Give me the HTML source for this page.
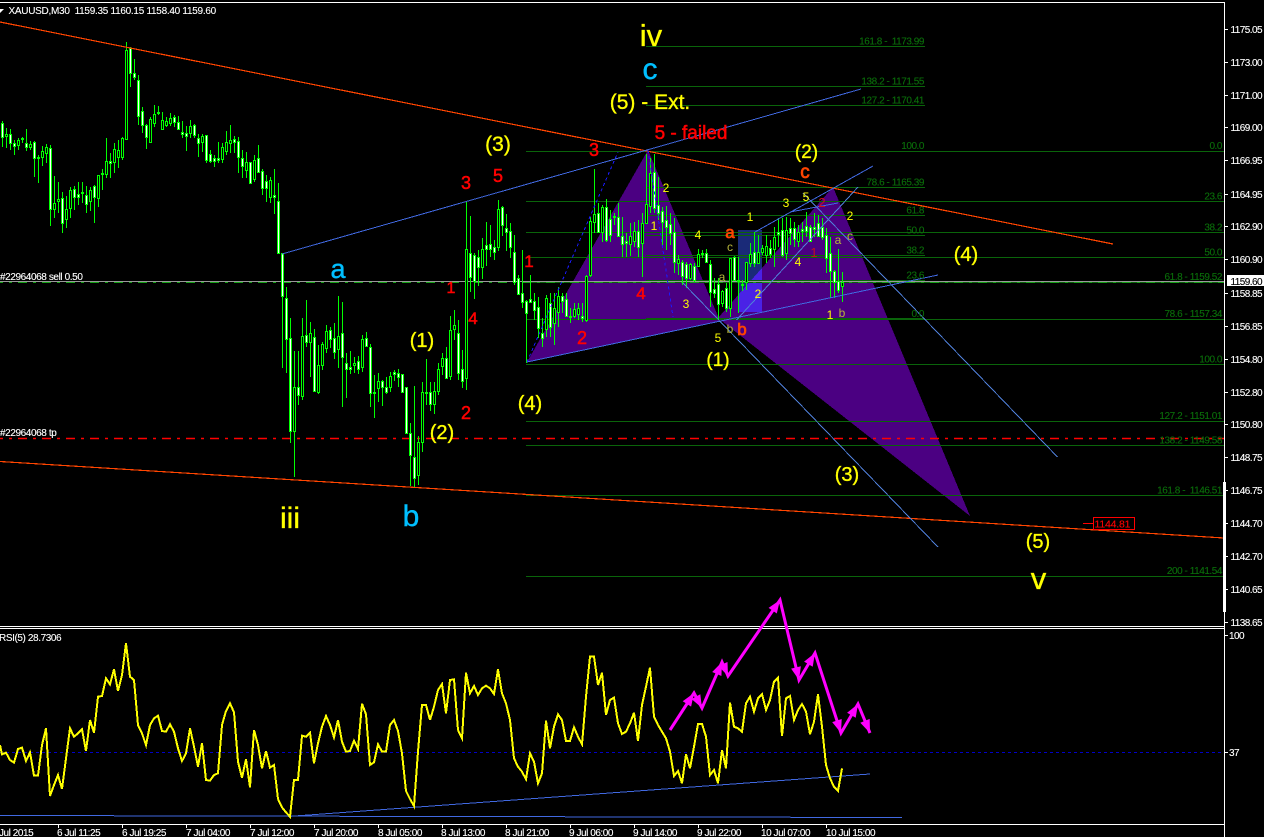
<!DOCTYPE html>
<html><head><meta charset="utf-8"><style>
html,body{margin:0;padding:0;background:#000;overflow:hidden}
svg{display:block}
text{font-family:"Liberation Sans",sans-serif}
.s{font-size:10px;letter-spacing:-.55px;fill:#fff;stroke:#fff;stroke-width:.12}
.t{letter-spacing:-.45px}
.f{font-size:10px;letter-spacing:-.45px;fill:#0a6e0a;stroke:#0a6e0a;stroke-width:.12;text-anchor:end}
.y{fill:#ff0;stroke:#ff0;stroke-width:.35;text-anchor:middle}
.r{fill:#f00;stroke:#f00;stroke-width:.5;text-anchor:middle}
.o{fill:#ff4500;stroke:#ff4500;stroke-width:.7;text-anchor:middle}
.c{fill:#00bfff;stroke:#00bfff;stroke-width:.4;text-anchor:middle}
.l{fill:#b4b43a;text-anchor:middle;font-size:12px}
.n{fill:#ff0;text-anchor:middle;font-size:12px}
</style></head><body>
<svg width="1264" height="837" viewBox="0 0 1264 837" xmlns="http://www.w3.org/2000/svg">
<rect width="1264" height="837" fill="#000"/>
<g shape-rendering="crispEdges">
<polygon points="527,362 648,150 720,321" fill="#4b0082"/>
<polygon points="718,318 833,187 970,516" fill="#4b0082"/>
<polygon points="738,230 762,230 762,268 738,295" fill="#1a2a78"/>
<polygon points="738,312 762,312 762,268 738,295" fill="#4a22e6"/>
</g>
<g stroke="#0a640a" stroke-width="1" fill="none" shape-rendering="crispEdges">
<path d="M646 46.5H925M646 86.5H925M646 105.5H925M646 187.5H925M646 215.5H925M646 235.5H925M646 255.5H925M646 280.5H925M646 318.5H925"/>
<path d="M526 151.5H1224M526 201.5H1224M526 232.5H1224M526 257.5H1224M526 282.5H1224M526 319.5H1224M526 364.5H1224M526 421.5H1224M526 445.5H1224M526 495.5H1224M526 576.5H1224"/>
</g>
<path d="M0 438.5H1224" stroke="#f00" stroke-width="1.5" stroke-dasharray="9 6 3 6" stroke-dashoffset="6" fill="none"/>
<path d="M0 281.5H1224" stroke="#9a9a9a" stroke-width="1" fill="none"/>
<path d="M0 282.5H1224" stroke="#16a016" stroke-width="1" stroke-dasharray="9 6 3 6" stroke-dashoffset="6" fill="none"/>
<path fill="none" stroke="#00ff00" stroke-width="1" d="M2.5 121V147M6.5 128V148M10.5 129V150M14.5 140V155M18.5 138V150M22.5 137V143M26.5 129V151M30.5 141V150M34.5 141V177M38.5 155V183M42.5 146V166M46.5 144V163M50.5 145V226M54.5 176V218M58.5 182V213M62.5 192V233M66.5 196V228M70.5 187V218M74.5 186V210M78.5 182V205M82.5 182V203M86.5 186V213M90.5 187V211M94.5 185V223M98.5 175V207M102.5 169V190M106.5 138V178M110.5 153V178M114.5 143V173M118.5 140V168M122.5 137V160M126.5 42V139M130.5 47V87M134.5 59V80M138.5 75V125M142.5 107V133M146.5 124V149M150.5 117V143M154.5 105V127M158.5 106V115M162.5 112V130M166.5 117V127M170.5 113V126M174.5 115V127M178.5 116V129M182.5 121V138M186.5 126V151M190.5 120V138M194.5 124V138M198.5 134V157M202.5 134V152M206.5 135V163M210.5 150V163M214.5 155V167M218.5 142V163M222.5 143V163M226.5 131V155M230.5 125V153M234.5 136V153M238.5 137V173M242.5 150V178M246.5 152V178M250.5 162V183M254.5 155V182M258.5 145V173M262.5 169V195M266.5 175V202M270.5 177V203M274.5 169V214M278.5 183V254M282.5 253V368M286.5 287V373M290.5 318V443M294.5 351V477M298.5 351V405M302.5 318V400M306.5 300V347M310.5 322V377M314.5 329V392M318.5 345V394M322.5 342V370M326.5 325V353M330.5 327V348M334.5 323V359M338.5 296V368M342.5 302V407M346.5 353V398M350.5 351V374M354.5 357V373M358.5 356V374M362.5 335V372M366.5 332V346M370.5 344V407M374.5 375V418M378.5 373V402M382.5 380V406M386.5 377V394M390.5 372V392M394.5 370V381M398.5 369V387M402.5 374V392M406.5 387V433M410.5 423V486M414.5 386V487M418.5 436V485M422.5 382V452M426.5 359V405M430.5 382V411M434.5 382V414M438.5 363V395M442.5 353V375M446.5 347V379M450.5 316V380M454.5 310V340M458.5 320V380M462.5 350V388M466.5 202V390M470.5 216V292M474.5 253V299M478.5 250V286M482.5 238V279M486.5 222V266M490.5 225V257M494.5 240V260M498.5 200V251M502.5 206V236M506.5 214V251M510.5 223V258M514.5 235V285M518.5 275V295M522.5 250V308M526.5 300V363M530.5 275V303M534.5 293V320M538.5 297V338M542.5 318V347M546.5 295V337M550.5 293V337M554.5 293V345M558.5 287V327M562.5 293V313M566.5 293V317M570.5 308V323M574.5 303V318M578.5 303V320M582.5 303V322M586.5 275V322M590.5 217V277M594.5 169V233M598.5 203V233M602.5 205V242M606.5 199V242M610.5 210V242M614.5 213V225M618.5 203V236M622.5 217V257M626.5 233V257M630.5 223V256M634.5 222V247M638.5 220V257M642.5 213V277M646.5 154V223M650.5 158V213M654.5 154V213M658.5 177V220M662.5 207V245M666.5 206V250M670.5 213V245M674.5 218V273M678.5 255V275M682.5 260V285M686.5 262V288M690.5 263V280M694.5 263V282M698.5 249V266M702.5 250V258M706.5 249V262M710.5 260V307M714.5 278V298M718.5 278V320M722.5 290V307M726.5 283V312M730.5 258V317M734.5 256V280M738.5 257V313M742.5 280V291M746.5 262V290M750.5 243V267M754.5 232V267M758.5 235V263M762.5 245V255M766.5 235V263M770.5 240V258M774.5 227V267M778.5 218V247M782.5 218V257M786.5 217V260M790.5 218V245M794.5 222V247M798.5 225V247M802.5 222V242M806.5 212V237M810.5 225V242M814.5 213V237M818.5 215V237M822.5 218V240M826.5 228V273M830.5 237V298M834.5 270V298M838.5 249V293M842.5 272V302"/>
<path fill="#fff" stroke="#00ff00" stroke-width="1" d="M1.5 123.5h2V137.5h-2zM9.5 134.5h2V143.5h-2zM13.5 143.5h2V146.5h-2zM21.5 138.5h2V139.5h-2zM25.5 143.5h2V147.5h-2zM33.5 142.5h2V158.5h-2zM37.5 157.5h2V158.5h-2zM49.5 148.5h2V209.5h-2zM61.5 198.5h2V223.5h-2zM73.5 189.5h2V197.5h-2zM77.5 194.5h2V197.5h-2zM81.5 192.5h2V193.5h-2zM85.5 195.5h2V204.5h-2zM93.5 186.5h2V197.5h-2zM101.5 173.5h2V174.5h-2zM109.5 161.5h2V163.5h-2zM129.5 48.5h2V73.5h-2zM133.5 73.5h2V77.5h-2zM137.5 80.5h2V116.5h-2zM141.5 111.5h2V125.5h-2zM145.5 125.5h2V137.5h-2zM157.5 112.5h2V113.5h-2zM173.5 117.5h2V122.5h-2zM177.5 122.5h2V129.5h-2zM181.5 132.5h2V134.5h-2zM185.5 133.5h2V136.5h-2zM193.5 125.5h2V135.5h-2zM197.5 138.5h2V143.5h-2zM205.5 135.5h2V160.5h-2zM209.5 154.5h2V161.5h-2zM213.5 158.5h2V161.5h-2zM217.5 158.5h2V160.5h-2zM233.5 139.5h2V142.5h-2zM237.5 141.5h2V157.5h-2zM241.5 158.5h2V166.5h-2zM249.5 162.5h2V183.5h-2zM257.5 158.5h2V172.5h-2zM261.5 171.5h2V188.5h-2zM265.5 181.5h2V188.5h-2zM273.5 195.5h2V197.5h-2zM277.5 201.5h2V253.5h-2zM281.5 253.5h2V296.5h-2zM285.5 298.5h2V339.5h-2zM289.5 338.5h2V431.5h-2zM297.5 387.5h2V395.5h-2zM305.5 335.5h2V342.5h-2zM313.5 337.5h2V391.5h-2zM329.5 330.5h2V339.5h-2zM333.5 338.5h2V352.5h-2zM341.5 333.5h2V357.5h-2zM345.5 363.5h2V369.5h-2zM349.5 367.5h2V369.5h-2zM357.5 361.5h2V369.5h-2zM365.5 338.5h2V346.5h-2zM369.5 347.5h2V393.5h-2zM381.5 381.5h2V387.5h-2zM385.5 387.5h2V392.5h-2zM393.5 372.5h2V374.5h-2zM397.5 373.5h2V377.5h-2zM401.5 374.5h2V392.5h-2zM405.5 387.5h2V433.5h-2zM409.5 433.5h2V455.5h-2zM413.5 457.5h2V478.5h-2zM425.5 392.5h2V393.5h-2zM429.5 392.5h2V404.5h-2zM445.5 358.5h2V378.5h-2zM457.5 333.5h2V373.5h-2zM461.5 369.5h2V381.5h-2zM469.5 253.5h2V277.5h-2zM473.5 255.5h2V281.5h-2zM477.5 257.5h2V267.5h-2zM485.5 245.5h2V249.5h-2zM489.5 244.5h2V249.5h-2zM493.5 247.5h2V252.5h-2zM501.5 207.5h2V225.5h-2zM505.5 228.5h2V232.5h-2zM509.5 231.5h2V247.5h-2zM513.5 252.5h2V282.5h-2zM517.5 278.5h2V294.5h-2zM521.5 293.5h2V302.5h-2zM525.5 301.5h2V313.5h-2zM529.5 299.5h2V302.5h-2zM533.5 301.5h2V310.5h-2zM537.5 307.5h2V328.5h-2zM541.5 333.5h2V338.5h-2zM549.5 303.5h2V327.5h-2zM561.5 296.5h2V301.5h-2zM565.5 299.5h2V316.5h-2zM569.5 316.5h2V317.5h-2zM581.5 316.5h2V318.5h-2zM597.5 213.5h2V232.5h-2zM605.5 207.5h2V240.5h-2zM609.5 219.5h2V235.5h-2zM613.5 216.5h2V217.5h-2zM617.5 217.5h2V236.5h-2zM621.5 236.5h2V244.5h-2zM625.5 241.5h2V243.5h-2zM637.5 231.5h2V247.5h-2zM653.5 172.5h2V208.5h-2zM657.5 205.5h2V213.5h-2zM661.5 211.5h2V222.5h-2zM665.5 220.5h2V227.5h-2zM669.5 224.5h2V233.5h-2zM673.5 232.5h2V262.5h-2zM681.5 262.5h2V276.5h-2zM685.5 264.5h2V278.5h-2zM693.5 266.5h2V280.5h-2zM701.5 253.5h2V254.5h-2zM705.5 253.5h2V262.5h-2zM709.5 264.5h2V292.5h-2zM713.5 289.5h2V293.5h-2zM717.5 284.5h2V304.5h-2zM725.5 288.5h2V308.5h-2zM733.5 257.5h2V280.5h-2zM737.5 280.5h2V281.5h-2zM741.5 284.5h2V285.5h-2zM753.5 252.5h2V263.5h-2zM769.5 248.5h2V254.5h-2zM777.5 232.5h2V234.5h-2zM781.5 230.5h2V255.5h-2zM789.5 228.5h2V233.5h-2zM793.5 228.5h2V239.5h-2zM801.5 229.5h2V231.5h-2zM805.5 226.5h2V231.5h-2zM809.5 227.5h2V241.5h-2zM813.5 227.5h2V229.5h-2zM817.5 223.5h2V236.5h-2zM821.5 227.5h2V237.5h-2zM825.5 235.5h2V258.5h-2zM829.5 253.5h2V271.5h-2zM833.5 271.5h2V282.5h-2zM837.5 281.5h2V290.5h-2z"/>
<path fill="#000" stroke="#00ff00" stroke-width="1" d="M5.5 134.5h2V136.5h-2zM17.5 140.5h2V145.5h-2zM29.5 144.5h2V147.5h-2zM41.5 151.5h2V157.5h-2zM45.5 147.5h2V153.5h-2zM53.5 203.5h2V209.5h-2zM57.5 199.5h2V201.5h-2zM65.5 209.5h2V219.5h-2zM69.5 190.5h2V208.5h-2zM89.5 190.5h2V201.5h-2zM97.5 175.5h2V198.5h-2zM105.5 161.5h2V174.5h-2zM113.5 149.5h2V162.5h-2zM117.5 150.5h2V157.5h-2zM121.5 138.5h2V157.5h-2zM125.5 50.5h2V139.5h-2zM149.5 119.5h2V142.5h-2zM153.5 114.5h2V123.5h-2zM161.5 120.5h2V129.5h-2zM165.5 121.5h2V125.5h-2zM169.5 118.5h2V123.5h-2zM189.5 126.5h2V133.5h-2zM201.5 136.5h2V142.5h-2zM221.5 147.5h2V159.5h-2zM225.5 142.5h2V151.5h-2zM229.5 140.5h2V143.5h-2zM245.5 162.5h2V170.5h-2zM253.5 160.5h2V179.5h-2zM269.5 180.5h2V197.5h-2zM293.5 387.5h2V431.5h-2zM301.5 336.5h2V396.5h-2zM309.5 333.5h2V342.5h-2zM317.5 365.5h2V392.5h-2zM321.5 344.5h2V365.5h-2zM325.5 331.5h2V348.5h-2zM337.5 336.5h2V349.5h-2zM353.5 363.5h2V365.5h-2zM361.5 339.5h2V367.5h-2zM373.5 392.5h2V393.5h-2zM377.5 381.5h2V388.5h-2zM389.5 376.5h2V387.5h-2zM417.5 442.5h2V475.5h-2zM421.5 392.5h2V442.5h-2zM433.5 391.5h2V404.5h-2zM437.5 369.5h2V391.5h-2zM441.5 358.5h2V366.5h-2zM449.5 330.5h2V376.5h-2zM453.5 325.5h2V329.5h-2zM465.5 249.5h2V378.5h-2zM481.5 249.5h2V267.5h-2zM497.5 209.5h2V247.5h-2zM545.5 298.5h2V329.5h-2zM553.5 308.5h2V323.5h-2zM557.5 296.5h2V312.5h-2zM573.5 309.5h2V316.5h-2zM577.5 308.5h2V314.5h-2zM585.5 276.5h2V320.5h-2zM589.5 221.5h2V275.5h-2zM593.5 214.5h2V222.5h-2zM601.5 207.5h2V232.5h-2zM629.5 236.5h2V244.5h-2zM633.5 231.5h2V241.5h-2zM641.5 223.5h2V243.5h-2zM645.5 204.5h2V223.5h-2zM649.5 173.5h2V206.5h-2zM677.5 259.5h2V263.5h-2zM689.5 264.5h2V278.5h-2zM697.5 254.5h2V266.5h-2zM721.5 291.5h2V303.5h-2zM729.5 258.5h2V308.5h-2zM745.5 262.5h2V282.5h-2zM749.5 254.5h2V263.5h-2zM757.5 252.5h2V263.5h-2zM761.5 248.5h2V252.5h-2zM765.5 246.5h2V255.5h-2zM773.5 237.5h2V249.5h-2zM785.5 230.5h2V253.5h-2zM797.5 232.5h2V241.5h-2zM841.5 282.5h2V286.5h-2z"/>
<g fill="none" stroke="#ff4500" stroke-width="1.2" shape-rendering="crispEdges">
<path d="M0 22L1113 244"/><path d="M0 461.5L1224 538"/>
</g>
<g fill="none" stroke="#4169e1" stroke-width="1" shape-rendering="crispEdges">
<path d="M282 254L861 89"/><path d="M527 362L938 275"/><path d="M755 232L873 166"/><path d="M790 212L838 203"/>
</g>
<g fill="none" stroke="#4f7fd8" stroke-width="1" shape-rendering="crispEdges">
<path d="M736.5 320L858 187"/><path d="M803 193L1057.5 457"/><path d="M683 283L938 547"/>
</g>
<g fill="none" stroke="#1a1aff" stroke-width="1" stroke-dasharray="3 3" shape-rendering="crispEdges">
<path d="M527 362L618 152"/><path d="M648 150L673 317"/>
</g>
<!-- frame -->
<g fill="none" stroke="#fff" stroke-width="1" shape-rendering="crispEdges">
<path d="M0 2.5H1224.5V837"/><path d="M0 626.5H1224"/><path d="M0 628.5H1224"/><path d="M0 824.5H1224"/>
<path d="M1224 29.5h4M1224 62.5h4M1224 95.5h4M1224 127.5h4M1224 160.5h4M1224 194.5h4M1224 226.5h4M1224 259.5h4M1224 293.5h4M1224 326.5h4M1224 359.5h4M1224 392.5h4M1224 424.5h4M1224 457.5h4M1224 490.5h4M1224 523.5h4M1224 556.5h4M1224 589.5h4M1224 622.5h4M1224 635.5h4M1224 752.5h4"/>
<path d="M58.5 824v4M122.5 824v4M186.5 824v4M250.5 824v4M314.5 824v4M378.5 824v4M442.5 824v4M506.5 824v4M570.5 824v4M634.5 824v4M698.5 824v4M762.5 824v4M826.5 824v4"/>
</g>
<rect x="1223" y="482" width="3" height="130" fill="#fff"/>
<!-- RSI -->
<path d="M0 752.5H1224" stroke="#0000c8" stroke-width="1" stroke-dasharray="3 3" fill="none"/>
<path d="M0 815.5L902 817.5" stroke="#4169e1" stroke-width="1" fill="none" shape-rendering="crispEdges"/>
<path d="M288 816.5L870 774" stroke="#4169e1" stroke-width="1" fill="none" shape-rendering="crispEdges"/>
<g transform="translate(0,625) scale(.33333)" fill="none" stroke="#ff0" stroke-width="6" shape-rendering="crispEdges">
<polyline points="0,360 6,388 18,383 30,405 42,413 54,372 66,368 78,408 90,382 102,452 114,452 126,360 138,310 150,513 162,480 174,450 186,492 198,400 210,310 222,335 234,325 246,313 258,378 270,285 282,323 294,215 306,213 318,160 330,178 342,133 354,198 366,150 378,55 390,155 402,165 414,300 426,325 438,360 450,300 462,280 474,272 486,318 498,320 510,298 522,320 534,370 546,408 558,385 570,310 582,365 594,425 606,355 618,465 630,467 642,450 654,445 666,300 678,258 690,235 702,262 714,410 726,458 738,403 750,487 762,315 774,360 786,430 798,378 810,428 822,420 834,522 846,547 858,562 870,575 882,465 894,465 906,332 918,335 930,323 942,415 954,355 966,305 978,273 990,300 1002,337 1014,285 1026,350 1038,380 1050,378 1062,347 1074,372 1086,236 1098,268 1110,420 1122,412 1134,358 1146,380 1158,380 1170,300 1182,285 1194,318 1206,385 1218,498 1230,522 1242,543 1254,380 1266,240 1278,240 1290,285"/>
</g>
<g transform="translate(420,590) scale(.33333)" fill="none" stroke="#ff0" stroke-width="6" shape-rendering="crispEdges">
<polyline points="30,390 42,350 54,300 66,282 78,370 90,270 102,268 114,420 126,445 138,248 150,310 162,288 174,315 186,295 198,287 210,295 222,312 234,238 246,310 258,340 270,390 282,505 294,530 306,545 318,568 330,490 342,515 354,580 366,550 378,392 390,475 402,410 414,373 426,390 438,453 450,453 462,412 474,440 486,463 498,320 510,200 522,200 534,285 546,248 558,375 570,330 582,323 594,400 606,432 618,425 630,400 642,368 654,453 666,345 678,290 690,233 702,380 714,405 726,425 738,445 750,485 762,558 774,543 786,580 798,493 810,535 822,470 834,402 846,402 858,440 870,555 882,540 894,580 906,480 918,535 930,338 942,410 954,415 966,425 978,340 990,320 1002,365 1014,325 1026,312 1038,360 1050,330 1062,275 1074,263 1086,438 1098,325 1110,318 1122,390 1134,360 1146,342 1158,365 1170,433 1182,395 1194,313 1206,410 1218,525 1230,565 1242,590 1254,603 1266,535"/>
</g>
<!-- magenta arrows -->
<polyline points="670,730 694,693 702,708 722,662 728,676 780,600 799,680 815,653 841,733 858,704 870,733" fill="none" stroke="#f0f" stroke-width="3"/>
<g fill="#f0f">
<polygon points="694,693 691.1,706.6 682.7,701.2"/><polygon points="702,708 700.3,694.2 691.5,699"/><polygon points="722,662 721.4,676 712.2,672"/><polygon points="728,676 727.5,662 718.3,666"/><polygon points="780,600 776.8,613.5 768.6,607.9"/><polygon points="799,680 800.9,666.2 791.1,668.6"/><polygon points="815,653 812.7,666.8 804.1,661.6"/><polygon points="841,733 841.7,719 832.2,722.1"/><polygon points="858,704 855.7,717.7 847.1,712.7"/><polygon points="870,733 869.7,718.9 860.3,722.7"/>
</g>
<!-- header -->
<polygon points="0,9 4,9 0,13" fill="#fff"/>
<text class="s" x="8.5" y="14" style="letter-spacing:-.28px" xml:space="preserve">XAUUSD,M30  1159.35 1160.15 1158.40 1159.60</text>
<text class="s" x="0" y="280" style="letter-spacing:-.4px">#22964068 sell 0.50</text>
<text class="s" x="0" y="436" style="letter-spacing:-.4px">#22964068 tp</text>
<text class="s" x="-1" y="641" style="letter-spacing:-.4px">RSI(5) 28.7306</text>
<!-- axis -->
<text class="s" x="1230.5" y="33">1175.05</text><text class="s" x="1230.5" y="66">1173.00</text><text class="s" x="1230.5" y="99">1171.00</text><text class="s" x="1230.5" y="131">1169.00</text><text class="s" x="1230.5" y="164">1166.95</text><text class="s" x="1230.5" y="198">1164.95</text><text class="s" x="1230.5" y="230">1162.90</text><text class="s" x="1230.5" y="263">1160.90</text><text class="s" x="1230.5" y="297">1158.85</text><text class="s" x="1230.5" y="330">1156.85</text><text class="s" x="1230.5" y="363">1154.80</text><text class="s" x="1230.5" y="396">1152.80</text><text class="s" x="1230.5" y="428">1150.80</text><text class="s" x="1230.5" y="461">1148.75</text><text class="s" x="1230.5" y="494">1146.75</text><text class="s" x="1230.5" y="527">1144.70</text><text class="s" x="1230.5" y="560">1142.70</text><text class="s" x="1230.5" y="593">1140.65</text><text class="s" x="1230.5" y="626">1138.65</text>
<text class="s" x="1229" y="639">100</text><text class="s" x="1229" y="756">37</text>
<rect x="1227" y="275" width="37" height="11" fill="#fff"/>
<text class="s" x="1230.5" y="285" style="fill:#000;stroke:#000">1159.60</text>
<path d="M1083 523.5H1093" stroke="#f00" fill="none"/>
<rect x="1093.5" y="517.5" width="41" height="12" fill="#000" stroke="#f00"/>
<text class="s" x="1094.5" y="527.5" style="fill:#f00;stroke:#f00;font-size:10.5px;letter-spacing:-.2px">1144.81</text>
<!-- time axis -->
<text class="s t" x="-1" y="836">Jul 2015</text>
<text class="s t" x="57" y="836">6 Jul 11:25</text><text class="s t" x="122" y="836">6 Jul 19:25</text><text class="s t" x="186" y="836">7 Jul 04:00</text><text class="s t" x="250" y="836">7 Jul 12:00</text><text class="s t" x="314" y="836">7 Jul 20:00</text><text class="s t" x="378" y="836">8 Jul 05:00</text><text class="s t" x="441" y="836">8 Jul 13:00</text><text class="s t" x="505" y="836">8 Jul 21:00</text><text class="s t" x="569" y="836">9 Jul 06:00</text><text class="s t" x="633" y="836">9 Jul 14:00</text><text class="s t" x="697" y="836">9 Jul 22:00</text><text class="s t" x="761" y="836">10 Jul 07:00</text><text class="s t" x="826" y="836">10 Jul 15:00</text>
<!-- fib labels -->
<text class="f" x="924" y="44.5" xml:space="preserve">161.8 -  1173.99</text><text class="f" x="924" y="84.5">138.2 - 1171.55</text><text class="f" x="924" y="103.5">127.2 - 1170.41</text><text class="f" x="924" y="149">100.0</text><text class="f" x="924" y="185.5">78.6 - 1165.39</text><text class="f" x="924" y="213.5">61.8</text><text class="f" x="924" y="233.5">50.0</text><text class="f" x="924" y="253.5">38.2</text><text class="f" x="924" y="278.5">23.6</text><text class="f" x="924" y="317">0.0</text>
<text class="f" x="1222" y="149">0.0</text><text class="f" x="1222" y="199.5">23.6</text><text class="f" x="1222" y="230.5">38.2</text><text class="f" x="1222" y="255.5">50.0</text><text class="f" x="1222" y="280">61.8 - 1159.52</text><text class="f" x="1222" y="317">78.6 - 1157.34</text><text class="f" x="1222" y="362.5">100.0</text><text class="f" x="1222" y="419">127.2 - 1151.01</text><text class="f" x="1222" y="443.5">138.2 - 1149.58</text><text class="f" x="1222" y="493.5" xml:space="preserve">161.8 -  1146.51</text><text class="f" x="1222" y="574">200 - 1141.54</text>
<!-- wave labels -->
<text class="y" x="651" y="46" font-size="31">iv</text>
<text class="c" x="650" y="79" font-size="30">c</text>
<text class="y" x="650" y="109" font-size="21">(5) - Ext.</text>
<text class="r" x="691" y="139" font-size="19">5 - failed</text>
<text class="y" x="498" y="151" font-size="21">(3)</text>
<text class="y" x="806.5" y="158" font-size="19">(2)</text>
<text class="o" x="805" y="178" font-size="19">c</text>
<text class="r" x="466" y="189" font-size="18">3</text>
<text class="r" x="498" y="182" font-size="18">5</text>
<text class="r" x="594" y="156" font-size="18">3</text>
<text class="c" x="338" y="278" font-size="27">a</text>
<text class="r" x="451" y="293" font-size="16">1</text>
<text class="r" x="529" y="267" font-size="17">1</text>
<text class="r" x="473" y="324" font-size="17">4</text>
<text class="r" x="641" y="299" font-size="17">4</text>
<text class="y" x="422" y="347" font-size="20">(1)</text>
<text class="r" x="582" y="344" font-size="18">2</text>
<text class="r" x="466" y="419" font-size="18">2</text>
<text class="y" x="442" y="439" font-size="20">(2)</text>
<text class="y" x="530" y="410" font-size="20">(4)</text>
<text class="y" x="290" y="528" font-size="30">iii</text>
<text class="c" x="411" y="526" font-size="30">b</text>
<text class="y" x="718" y="366" font-size="19">(1)</text>
<text class="y" x="966" y="261" font-size="20">(4)</text>
<text class="y" x="847" y="481" font-size="20">(3)</text>
<text class="y" x="1038" y="548" font-size="20">(5)</text>
<text class="y" x="1038.5" y="589" font-size="31">v</text>
<text class="o" x="730" y="238" font-size="17">a</text>
<text class="o" x="742" y="335" font-size="17">b</text>
<text class="n" x="666" y="192">2</text><text class="n" x="654" y="230">1</text><text class="n" x="698" y="239">4</text><text class="n" x="686" y="308">3</text><text class="n" x="718" y="342">5</text><text class="n" x="750" y="221">1</text><text class="n" x="758" y="298">2</text><text class="n" x="798" y="266">4</text><text class="n" x="786" y="207">3</text><text class="n" x="806" y="201">5</text><text class="n" x="850" y="220">2</text><text class="n" x="830" y="319">1</text>
<text class="l" x="730" y="251">c</text><text class="l" x="722" y="281">a</text><text class="l" x="730" y="333">b</text><text class="l" x="838" y="244">a</text><text class="l" x="850" y="240">c</text><text class="l" x="842" y="317">b</text>
<text x="822" y="207" font-size="13" style="fill:#d01018;text-anchor:middle">2</text>
<text x="814" y="257" font-size="13" style="fill:#c01020;text-anchor:middle">1</text>
</svg>
</body></html>
